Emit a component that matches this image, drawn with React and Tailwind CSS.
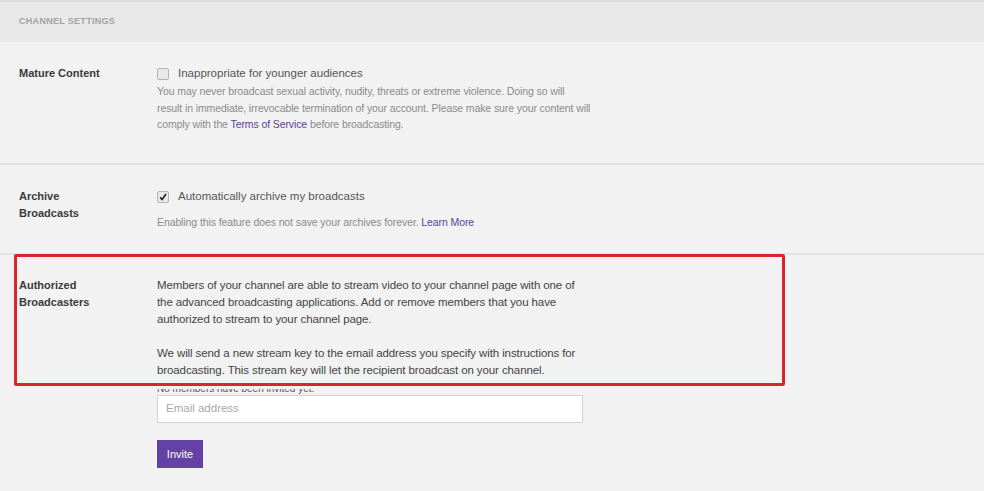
import React from "react";

const font = { fontFamily: '"Liberation Sans", Arial, sans-serif' };

const Checkbox = ({ checked }) => (
  <span className="inline-flex h-[12px] w-[12px] shrink-0 items-center justify-center rounded-[2px] border border-[#b5b5b5] bg-[#e9e9e9]">
    {checked && (
      <svg viewBox="0 0 12 12" className="h-[10px] w-[10px]">
        <path d="M2.5 6.5 L5 9 L9.5 2.5" fill="none" stroke="#222" strokeWidth="2" />
      </svg>
    )}
  </span>
);

const Section = ({ label, children, className = "" }) => (
  <div className={"flex border-b-2 border-[#e3e3e3] " + className}>
    <div className="w-[157px] shrink-0 pl-[19px] pr-2 text-[11px] font-bold leading-[17px] text-[#3a3a3a]">
      {label}
    </div>
    <div className="flex-1">{children}</div>
  </div>
);

export default function App() {
  return (
    <div className="relative h-[491px] w-[984px] overflow-hidden bg-[#f2f2f2]" style={font}>
      <div className="flex h-[42px] items-center border-t-2 border-[#dcdcdc] bg-[#e8e8e8] pl-[19px]">
        <span className="text-[9px] font-bold tracking-[0.3px] text-[#a3a3a3]">CHANNEL SETTINGS</span>
      </div>

      <Section label="Mature Content" className="h-[123px] pt-[23px]">
        <div className="flex items-center gap-[9px]">
          <Checkbox />
          <span className="text-[11.5px] leading-[17px] text-[#555]">Inappropriate for younger audiences</span>
        </div>
        <p className="mt-[1px] whitespace-nowrap text-[10.5px] leading-[16.5px] tracking-[-0.1px] text-[#8a8a8a]">
          You may never broadcast sexual activity, nudity, threats or extreme violence. Doing so will
          <br />
          result in immediate, irrevocable termination of your account. Please make sure your content will
          <br />
          comply with the <span className="text-[#5b3f96]">Terms of Service</span> before broadcasting.
        </p>
      </Section>

      <Section label={<>Archive<br />Broadcasts</>} className="h-[90px] pt-[23px]">
        <div className="flex items-center gap-[9px]">
          <Checkbox checked />
          <span className="text-[11.5px] leading-[17px] text-[#555]">Automatically archive my broadcasts</span>
        </div>
        <p className="mt-[9px] text-[10.5px] leading-[16px] tracking-[-0.1px] text-[#8a8a8a]">
          Enabling this feature does not save your archives forever.{" "}
          <span className="text-[#5b3f96]">Learn More</span>
        </p>
      </Section>

      <div className="flex pt-[22px]">
        <div className="w-[157px] shrink-0 pl-[19px] text-[11px] font-bold leading-[17px] text-[#3a3a3a]">
          Authorized
          <br />
          Broadcasters
        </div>
        <div className="flex-1">
          <div className="whitespace-nowrap text-[11.5px] leading-[17px] tracking-[-0.1px] text-[#444]">
            <p>
              Members of your channel are able to stream video to your channel page with one of
              <br />
              the advanced broadcasting applications. Add or remove members that you have
              <br />
              authorized to stream to your channel page.
            </p>
            <p className="mt-[17px]">
              We will send a new stream key to the email address you specify with instructions for
              <br />
              broadcasting. This stream key will let the recipient broadcast on your channel.
            </p>
          </div>
          <p className="mt-[4px] text-[10px] leading-[12px] text-[#555]">No members have been invited yet.</p>
          <div className="flex h-[28px] w-[426px] items-center border border-[#d3d3d3] bg-white pl-[8px] text-[11.5px] text-[#a8a8a8]">
            Email address
          </div>
          <button className="mt-[17px] h-[28px] w-[46px] bg-[#6441a5] text-[11px] text-white">Invite</button>
        </div>
      </div>

      <div className="absolute left-[14px] top-[254px] h-[132px] w-[771px] rounded-[2px] border-[3px] border-[#d8262c]" />
      <div className="absolute left-[157px] top-[386px] h-[3px] w-[426px] bg-[#f2f2f2]" />
    </div>
  );
}
